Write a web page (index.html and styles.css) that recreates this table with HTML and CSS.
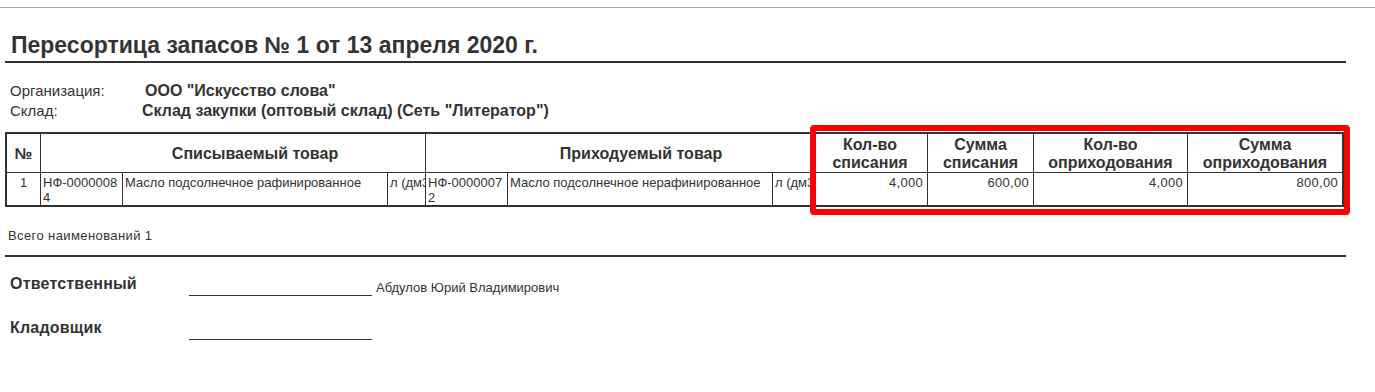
FILE: index.html
```html
<!DOCTYPE html>
<html lang="ru">
<head>
<meta charset="utf-8">
<title>Пересортица запасов</title>
<link rel="stylesheet" href="styles.css">
</head>
<body>
<div class="topbar"></div>
<div class="page">
  <h1 class="title">Пересортица запасов № 1 от 13 апреля 2020 г.</h1>

  <div class="info">
    <div class="info-row"><span class="info-label">Организация:</span><span class="info-value org">ООО "Искусство слова"</span></div>
    <div class="info-row"><span class="info-label">Склад:</span><span class="info-value">Склад закупки (оптовый склад) (Сеть "Литератор")</span></div>
  </div>

  <div class="table-wrap">
    <div class="grid">
      <div class="hcell c-num">№</div>
      <div class="hcell c-wide span3">Списываемый товар</div>
      <div class="hcell c-wide span3">Приходуемый товар</div>
      <div class="hcell">Кол-во<br>списания</div>
      <div class="hcell">Сумма<br>списания</div>
      <div class="hcell">Кол-во<br>оприходования</div>
      <div class="hcell last">Сумма<br>оприходования</div>

      <div class="dcell center">1</div>
      <div class="dcell code">НФ-00000084</div>
      <div class="dcell">Масло подсолнечное рафинированное</div>
      <div class="dcell clip">л (дм3)</div>
      <div class="dcell code">НФ-00000072</div>
      <div class="dcell">Масло подсолнечное нерафинированное</div>
      <div class="dcell clip">л (дм3)</div>
      <div class="dcell num">4,000</div>
      <div class="dcell num">600,00</div>
      <div class="dcell num">4,000</div>
      <div class="dcell num last">800,00</div>
    </div>
    <div class="highlight"></div>
  </div>

  <div class="total">Всего наименований 1</div>
  <div class="rule"></div>

  <div class="sign">
    <div class="sign-label">Ответственный</div>
    <div class="sign-line"></div>
    <div class="sign-name">Абдулов Юрий Владимирович</div>
  </div>
  <div class="sign second">
    <div class="sign-label">Кладовщик</div>
    <div class="sign-line"></div>
    <div class="sign-name"></div>
  </div>
</div>
</body>
</html>
```

FILE: styles.css
```css
* { box-sizing: border-box; }
html, body {
  margin: 0;
  padding: 0;
  background: #fff;
  color: #333;
  font-family: "Liberation Sans", Arial, sans-serif;
}
.topbar {
  margin-top: 7px;
  height: 1px;
  background: #aaa;
}
.page {
  margin-left: 5px;
  width: 1341px;
}
.title {
  margin: 24px 0 0 0;
  padding: 0 0 3px 6px;
  font-size: 23px;
  line-height: 26px;
  font-weight: bold;
  border-bottom: 2px solid #333;
}
.info {
  margin-top: 18px;
  padding-left: 5px;
}
.info-row {
  display: flex;
  font-size: 15px;
  line-height: 20px;
}
.info-label {
  width: 132px;
}
.info-value {
  font-weight: bold;
  font-size: 16px;
}
.info-value.org {
  margin-left: 3px;
}
.table-wrap {
  position: relative;
  margin-top: 11px;
  width: 1339px;
}
.grid {
  display: grid;
  grid-template-columns: 34px 82px 265px 38px 82px 265px 40px 115px 106px 154px 154px;
  grid-template-rows: 39px 32px;
  border: 2px solid #333;
}
.hcell {
  border-right: 1px solid #333;
  border-bottom: 1px solid #333;
  font-size: 16px;
  line-height: 18px;
  font-weight: bold;
  text-align: center;
  display: flex;
  align-items: center;
  justify-content: center;
  padding-top: 1px;
}
.hcell.span3 { grid-column: span 3; padding-left: 44px; }
.last { border-right: none !important; }
.dcell {
  border-right: 1px solid #333;
  font-size: 13px;
  line-height: 15px;
  padding: 2px 2px 0 2px;
  overflow: hidden;
}
.dcell.center { text-align: center; }
.dcell.code { word-break: break-all; }
.dcell.clip { white-space: nowrap; }
.dcell.num { text-align: right; padding-right: 4px; letter-spacing: 0.3px; }
.highlight {
  position: absolute;
  left: 805px;
  top: -7px;
  width: 540px;
  height: 90px;
  border: 6px solid #ff0000;
  border-radius: 4px;
}
.total {
  margin-top: 22px;
  padding-left: 3px;
  font-size: 13px;
  line-height: 14px;
  letter-spacing: 0.4px;
}
.rule {
  margin-top: 12px;
  height: 2px;
  background: #333;
}
.sign {
  display: flex;
  margin-top: 17px;
  padding-left: 5px;
  height: 22px;
}
.sign.second { margin-top: 22px; }
.sign-label {
  width: 179px;
  font-size: 16px;
  line-height: 20px;
  font-weight: bold;
  letter-spacing: 0.2px;
}
.sign-line {
  width: 183px;
  height: 22px;
  border-bottom: 1px solid #333;
}
.sign-name {
  margin-left: 4px;
  margin-top: 6px;
  font-size: 13px;
  line-height: 16px;
}
```
